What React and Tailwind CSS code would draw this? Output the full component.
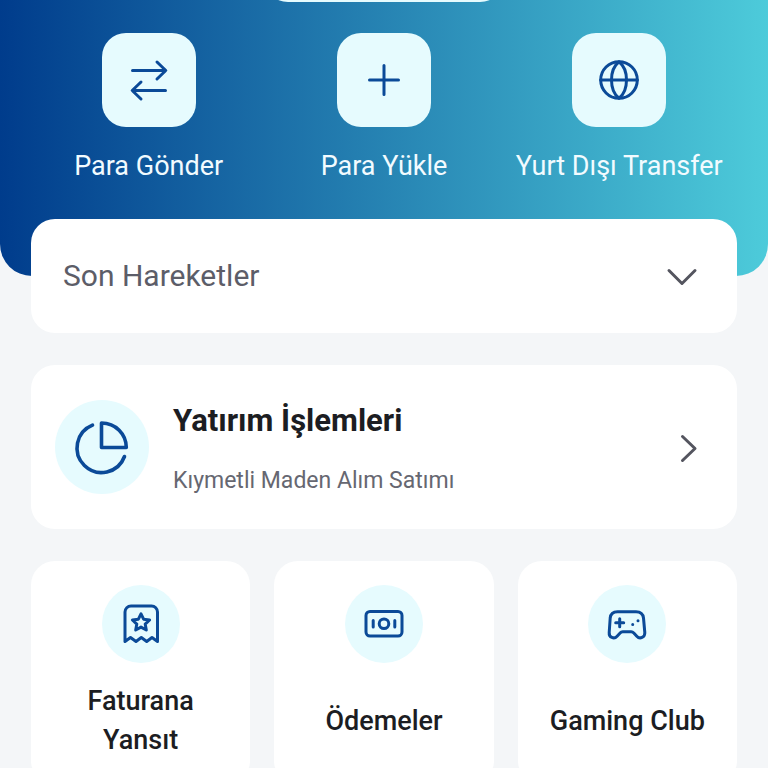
/* eslint-disable react/prop-types */

function Icon({ className, strokeWidth = 3, children }) {
  return (
    <svg
      viewBox="0 0 48 48"
      fill="none"
      stroke="currentColor"
      strokeWidth={strokeWidth}
      strokeLinecap="round"
      strokeLinejoin="round"
      className={className}
      aria-hidden="true"
    >
      {children}
    </svg>
  );
}

const quickActions = [
  {
    label: "Para Gönder",
    icon: (
      <>
        <path d="M7.5 14.5h33M32 6l8.8 8.5L32 23" />
        <path d="M40.5 34.5h-33M16 26l-8.8 8.5L16 43" />
      </>
    ),
  },
  {
    label: "Para Yükle",
    icon: <path d="M24 9.5v29M9.5 24h29" />,
  },
  {
    label: "Yurt Dışı Transfer",
    icon: (
      <>
        <circle cx="24" cy="24" r="18.3" />
        <path d="M5.7 24h36.6" />
        <path d="M24 5.7c-4.8 3.8-7.5 10.5-7.5 18.3s2.7 14.5 7.5 18.3c4.8-3.8 7.5-10.5 7.5-18.3S28.8 9.5 24 5.7z" />
      </>
    ),
  },
];

const services = [
  {
    label: "Faturana Yansıt",
    icon: (
      <>
        <path d="M8 41.5V12a6 6 0 0 1 6-6h20.5a6 6 0 0 1 6 6v29.5l-5.5-4-5.3 4-5.4-4-5.3 4-5.5-4z" />
        <path d="M24 13.8l2.6 5.4 6 .8-4.4 4.1 1.1 5.9-5.3-2.9-5.3 2.9 1.1-5.9-4.4-4.1 6-.8z" />
      </>
    ),
  },
  {
    label: "Ödemeler",
    icon: (
      <>
        <rect x="6" y="11.5" width="36" height="24.5" rx="4" />
        <circle cx="24" cy="23.8" r="4.8" />
        <path d="M13.2 20.5v6.5M34.8 20.5v6.5" />
      </>
    ),
  },
  {
    label: "Gaming Club",
    icon: (
      <>
        <path d="M14.5 11.7H33c4.5 0 7 2.3 7.5 6.3l1.3 14.5c.4 5-5 7-8 3.7l-3-3.2c-.8-.8-1.5-1.2-2.6-1.2h-8.5c-1.1 0-1.9.4-2.6 1.2l-3 3.2c-3 3.3-8.3 1.3-7.9-3.7L7.200 18c.4-4 2.8-6.300 7.300-6.300z" />
        <path d="M16.7 18.7v8M12.7 22.7h8" />
        <path d="M29.7 24.5h.01M35 20.7h.01" />
      </>
    ),
  },
];

function QuickAction({ label, icon }) {
  return (
    <button type="button" className="flex flex-col items-center gap-5">
      <span className="flex size-[94px] items-center justify-center rounded-3xl bg-[#e6fbfe] text-[#0b4a98]">
        <Icon className="size-12">{icon}</Icon>
      </span>
      <span className="whitespace-nowrap text-[27px] leading-[38px] text-[#f2fbff]">
        {label}
      </span>
    </button>
  );
}

function ServiceCard({ label, icon }) {
  return (
    <button
      type="button"
      className="flex flex-col items-center gap-[18px] rounded-3xl bg-white p-6"
    >
      <span className="flex size-[78px] items-center justify-center rounded-full bg-[#e6fbfe] text-[#0b4a98]">
        <Icon className="size-12">{icon}</Icon>
      </span>
      <span className="flex min-h-20 max-w-40 items-center text-[27px] font-medium leading-[39px] text-[#1c1d22]">
        {label}
      </span>
    </button>
  );
}

function App() {
  return (
    <div className="min-h-screen bg-[#f4f6f8] font-['Roboto',sans-serif]">
      <header className="overflow-hidden rounded-b-[32px] bg-linear-to-r/srgb from-[#003c8c] to-[#4dcbda] px-[31px] pb-[91px]">
        <div className="mx-auto -mt-[46px] h-12 w-60 rounded-full bg-[#e6fbfe]" />
        <nav className="mt-[31px] grid grid-cols-3">
          {quickActions.map((action) => (
            <QuickAction key={action.label} {...action} />
          ))}
        </nav>
      </header>

      <main className="-mt-[57px] flex flex-col gap-8 px-[31px]">
        <button
          type="button"
          aria-expanded="false"
          className="relative flex items-center justify-between rounded-3xl bg-white py-[33px] pl-8 pr-[31px] text-left"
        >
          <span className="text-[30px] leading-[42px] text-[#5c5d68]">
            Son Hareketler
          </span>
          <Icon className="size-12 text-[#54555f]">
            <path d="M11 18.5l13 13 13-13" />
          </Icon>
        </button>

        <button
          type="button"
          className="flex items-center gap-6 rounded-3xl bg-white py-[35px] pl-6 pr-6 text-left"
        >
          <span className="flex size-[94px] shrink-0 items-center justify-center rounded-full bg-[#e6fbfe] text-[#0b4a98]">
            <svg
              viewBox="0 0 64 64"
              fill="none"
              stroke="currentColor"
              strokeWidth="3.6"
              strokeLinecap="round"
              strokeLinejoin="round"
              className="size-16"
              aria-hidden="true"
            >
              <path d="M31.5 8v24.5h24.8C56.3 19 45.5 8 31.5 8z" />
              <path d="M22.500 10.200A24.500 24.500 0 1 0 54.500 41.500" />
            </svg>
          </span>
          <span className="-my-1 flex grow flex-col gap-6 pt-1">
            <span className="text-[31px] font-bold leading-10 text-[#1c1d22]">
              Yatırım İşlemleri
            </span>
            <span className="text-[23px] leading-8 text-[#666771]">
              Kıymetli Maden Alım Satımı
            </span>
          </span>
          <Icon className="size-12 shrink-0 text-[#54555f]">
            <path d="M17.5 13.500l12.500 12-12.500 12" />
          </Icon>
        </button>

        <div className="grid grid-cols-3 gap-6">
          {services.map((service) => (
            <ServiceCard key={service.label} {...service} />
          ))}
        </div>
      </main>
    </div>
  );
}

export default App;
